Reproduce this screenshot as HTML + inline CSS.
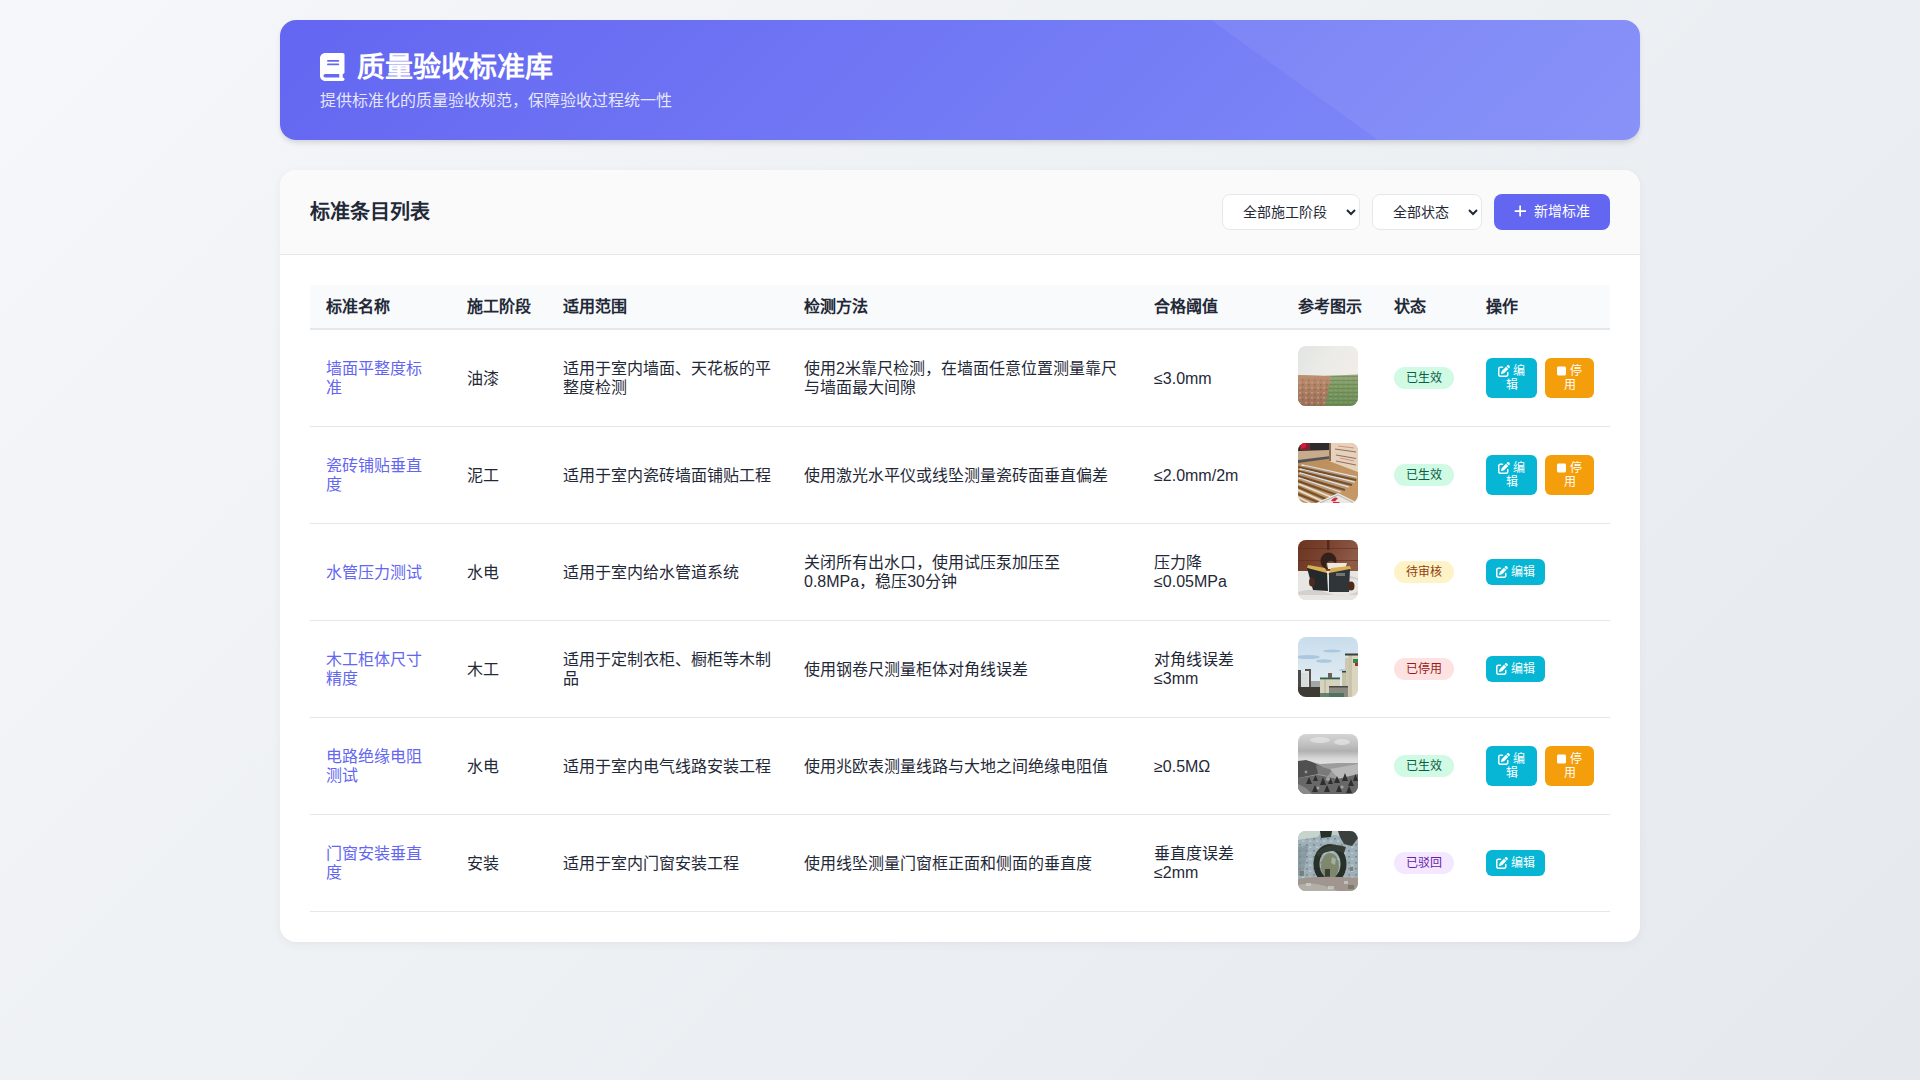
<!DOCTYPE html>
<html lang="zh-CN">
<head>
<meta charset="utf-8">
<title>质量验收标准库</title>
<style>
*{box-sizing:border-box;margin:0;padding:0}
html,body{width:1920px;height:1080px;overflow:hidden}
body{font-family:"Liberation Sans", sans-serif;background:linear-gradient(135deg,#f5f7fa 0%,#e5e9ed 100%);color:#1f2937;padding:20px 0}
.container{width:1360px;margin:0 auto}
.header{position:relative;height:120px;border-radius:16px;background:linear-gradient(135deg,#6366f1 0%,#818cf8 100%);box-shadow:0 4px 6px -1px rgba(0,0,0,0.1),0 2px 4px -1px rgba(0,0,0,0.06);overflow:hidden;color:#fff;padding:0 40px}
.header::before{content:"";position:absolute;top:0;left:0;right:0;bottom:0;background:rgba(255,255,255,0.06);clip-path:polygon(931px 0,1360px 0,1360px 120px,1098px 120px)}
.header h1{position:absolute;left:40px;top:30px;font-size:28px;font-weight:700;line-height:36px;display:flex;align-items:center}
.header h1 svg{width:24.5px;height:28px;margin-right:12px;fill:#fff;position:relative;top:-1.5px}
.header p{position:absolute;left:40px;top:69px;font-size:16px;line-height:24px;color:rgba(255,255,255,0.85)}
.card{margin-top:30px;background:#fff;border-radius:16px;box-shadow:0 2px 10px rgba(0,0,0,0.05);overflow:hidden}
.card-head{height:85px;background:#fafafa;border-bottom:1px solid #e5e7eb;display:flex;align-items:center;justify-content:space-between;padding:0 30px}
.card-head h2{font-size:20px;line-height:29px;font-weight:600;color:#1f2937;position:relative;top:0px}
.tools{display:flex;align-items:center}
.sel{height:36px;padding:8px 16px;border:1px solid #e5e7eb;border-radius:8px;background:#fff;font-family:"Liberation Sans", sans-serif;font-size:14px;color:#1f2937;margin-right:12px;outline:none}
.btn-add{height:36px;width:116px;border-radius:8px;background:#6366f1;color:#fff;font-size:14px;display:flex;align-items:center;justify-content:center}
.btn-add svg{width:12.25px;height:14px;fill:#fff;margin-right:8px;position:relative;top:-1px}
.btn-add span{position:relative;top:-1px;line-height:17px}
.tbl-wrap{padding:30px}
table{width:1300px;border-collapse:collapse;table-layout:fixed}
th{background:#f9fafb;height:44px;line-height:19px;text-align:left;padding:0 16px;font-size:16px;font-weight:700;color:#1f2937;border-bottom:2px solid #e5e7eb}
td{padding:16px;font-size:16px;color:#1f2937;border-bottom:1px solid #e5e7eb;vertical-align:middle;line-height:19px}
td.name{color:#6366f1}
td.thv{color:#1f2937}
.thumb{width:60px;height:60px;border-radius:8px;overflow:hidden;display:inline-block;vertical-align:baseline}
.thumb svg{display:block}
.badge{display:inline-block;height:22px;line-height:22px;padding:0 12px;border-radius:11px;font-size:12px;vertical-align:middle}
.b-ok{background:#d1fae5;color:#065f46}
.b-wait{background:#fef3c7;color:#92400e}
.b-off{background:#fee2e2;color:#991b1b}
.b-rej{background:#f3e8ff;color:#6b21a8}
.ops{display:flex;align-items:center}
.btn{display:block;color:#fff;font-size:12px;border-radius:6px;line-height:14px;text-align:center;padding:6px 0}
.btn svg{fill:#fff}
.edit{background:#06b6d4}
.stop{background:#f59e0b}
.w2{width:51px;height:40px;margin-right:8px}
.w2s{width:49px;height:40px}
.w1{width:59px;height:26px}
.ie{width:12px;height:12px;vertical-align:-1.5px}
.is{width:9px;height:12px;vertical-align:-1.5px}
</style>
</head>
<body>
<div class="container">
  <div class="header">
    <h1><svg viewBox="0 0 448 512"><path d="M96 0C43 0 0 43 0 96V416c0 53 43 96 96 96H384h32c17.7 0 32-14.3 32-32s-14.3-32-32-32V384c17.7 0 32-14.3 32-32V32c0-17.7-14.3-32-32-32H384 96zm0 384H352v64H96c-17.7 0-32-14.3-32-32s14.3-32 32-32zm32-240c0-8.8 7.2-16 16-16H336c8.8 0 16 7.2 16 16s-7.2 16-16 16H144c-8.8 0-16-7.2-16-16zm16 48H336c8.8 0 16 7.2 16 16s-7.2 16-16 16H144c-8.8 0-16-7.2-16-16s7.2-16 16-16z"/></svg>质量验收标准库</h1>
    <p>提供标准化的质量验收规范，保障验收过程统一性</p>
  </div>
  <div class="card">
    <div class="card-head">
      <h2>标准条目列表</h2>
      <div class="tools">
        <select class="sel"><option>全部施工阶段</option></select>
        <select class="sel"><option>全部状态</option></select>
        <div class="btn-add"><svg viewBox="0 0 448 512"><path d="M256 80c0-17.7-14.3-32-32-32s-32 14.3-32 32V224H48c-17.7 0-32 14.3-32 32s14.3 32 32 32H192V432c0 17.7 14.3 32 32 32s32-14.3 32-32V288H432c17.7 0 32-14.3 32-32s-14.3-32-32-32H256V80z"/></svg><span>新增标准</span></div>
      </div>
    </div>
    <div class="tbl-wrap">
      <table>
        <colgroup><col style="width:141px"><col style="width:96px"><col style="width:241px"><col style="width:350px"><col style="width:144px"><col style="width:96px"><col style="width:92px"><col style="width:140px"></colgroup>
        <thead><tr><th>标准名称</th><th>施工阶段</th><th>适用范围</th><th>检测方法</th><th>合格阈值</th><th>参考图示</th><th>状态</th><th>操作</th></tr></thead>
        <tbody>
<tr><td class="name">墙面平整度标<br>准</td><td>油漆</td><td>适用于室内墙面、天花板的平<br>整度检测</td><td>使用2米靠尺检测，在墙面任意位置测量靠尺<br>与墙面最大间隙</td><td class="thv">≤3.0mm</td><td><div class="thumb"><svg width="60" height="60" viewBox="0 0 60 60"><defs><linearGradient id="s1" x1="0" y1="0" x2="1" y2="0.6"><stop offset="0" stop-color="#e2e5e3"/><stop offset=".5" stop-color="#ecebe7"/><stop offset="1" stop-color="#f2eeea"/></linearGradient><linearGradient id="g1" x1="0" y1="0" x2="0" y2="1"><stop offset="0" stop-color="#98a67c"/><stop offset=".3" stop-color="#809c66"/><stop offset="1" stop-color="#6c8c58"/></linearGradient><linearGradient id="b1" x1="0" y1="0" x2="0" y2="1"><stop offset="0" stop-color="#c09070"/><stop offset=".35" stop-color="#b08266"/><stop offset="1" stop-color="#9c7058"/></linearGradient><pattern id="p1" width="6" height="5" patternUnits="userSpaceOnUse"><rect width="6" height="5" fill="none"/><rect x="1" y="1" width="2" height="1.5" fill="#d2b49c" opacity=".55"/><rect x="4" y="3" width="1.5" height="1.5" fill="#6e4a38" opacity=".45"/></pattern><pattern id="q1" width="5" height="4" patternUnits="userSpaceOnUse"><rect x="0" y="2" width="5" height="1" fill="#5a7a44" opacity=".45"/><rect x="2" y="0" width="1.5" height="1" fill="#b0c090" opacity=".4"/></pattern></defs><rect width="60" height="60" fill="url(#s1)"/><path d="M0 29 Q30 30.5 60 28.5 V60 H0Z" fill="url(#g1)"/><path d="M0 29 Q30 30.5 60 28.5 V60 H0Z" fill="url(#q1)"/><path d="M0 29 L33 30.3 L30 46 L27 60 H0Z" fill="url(#b1)"/><path d="M0 33 L32 34 L27 60 H0Z" fill="url(#p1)"/></svg></div></td><td><span class="badge b-ok">已生效</span></td><td><div class="ops"><div class="btn edit w2"><svg viewBox="0 0 512 512" class="ie"><path d="M471.6 21.7c-21.9-21.9-57.3-21.9-79.2 0L362.3 51.7l97.9 97.9 30.1-30.1c21.9-21.9 21.9-57.3 0-79.2L471.6 21.7zm-299.2 220c-6.1 6.1-10.8 13.6-13.5 21.9l-29.6 88.8c-2.900 8.6-.6 18.1 5.8 24.6s15.9 8.7 24.6 5.8l88.8-29.6c8.2-2.7 15.7-7.4 21.9-13.5L437.7 172.3 339.7 74.3 172.4 241.7zM96 64C43 64 0 107 0 160V416c0 53 43 96 96 96H352c53 0 96-43 96-96V320c0-17.7-14.3-32-32-32s-32 14.3-32 32v96c0 17.7-14.3 32-32 32H96c-17.7 0-32-14.3-32-32V160c0-17.7 14.3-32 32-32h96c17.7 0 32-14.3 32-32s-14.3-32-32-32H96z"/></svg> 编<br>辑</div><div class="btn stop w2s"><svg viewBox="0 0 384 512" class="is"><path d="M0 128C0 92.7 28.7 64 64 64H320c35.3 0 64 28.7 64 64V384c0 35.3-28.7 64-64 64H64c-35.3 0-64-28.7-64-64V128z"/></svg> 停<br>用</div></div></td></tr>
<tr><td class="name">瓷砖铺贴垂直<br>度</td><td>泥工</td><td>适用于室内瓷砖墙面铺贴工程</td><td>使用激光水平仪或线坠测量瓷砖面垂直偏差</td><td class="thv">≤2.0mm/2m</td><td><div class="thumb"><svg width="60" height="60" viewBox="0 0 60 60"><defs><linearGradient id="w2" x1="0" y1="0" x2="1" y2="1"><stop offset="0" stop-color="#b88a58"/><stop offset="1" stop-color="#c89a68"/></linearGradient></defs><rect width="60" height="60" fill="url(#w2)"/><path d="M0 0 H33 V14 L0 19Z" fill="#c9ab8c"/><path d="M0 0 H31 V7 L0 8Z" fill="#2f2b2c"/><path d="M2 0 H12 V7 H2Z" fill="#7c2430"/><path d="M3 0 H8 V4 L3 6Z" fill="#e0143c"/><path d="M0 17 L33 13 L33 15.5 L0 20Z" fill="#50545a"/><path d="M31 0 H60 V29 L31 18Z" fill="#e6d3bc"/><path d="M33 0 V18 L31 18 V0Z" fill="#8a6a50"/><g stroke="#7a5848" stroke-width="1.1" opacity=".8"><line x1="37" y1="6" x2="58" y2="9"/><line x1="38" y1="12" x2="58" y2="15.5"/><line x1="38" y1="18" x2="58" y2="22"/></g><g stroke="#c05040" stroke-width="1" opacity=".5"><line x1="40" y1="3" x2="56" y2="5"/><line x1="42" y1="15" x2="56" y2="18"/></g><g stroke="#5a3a1c" stroke-width="2.2" opacity=".75"><line x1="0" y1="24" x2="58" y2="37"/><line x1="0" y1="28" x2="54" y2="42"/><line x1="0" y1="33" x2="47" y2="47"/><line x1="0" y1="38" x2="39" y2="52"/><line x1="0" y1="44" x2="30" y2="57"/><line x1="0" y1="51" x2="22" y2="60"/></g><g stroke="#e6e2de" stroke-width="1.6" stroke-linecap="round"><line x1="4" y1="22" x2="58" y2="34"/><line x1="2" y1="26" x2="56" y2="39"/><line x1="2" y1="30" x2="50" y2="44"/><line x1="1" y1="35" x2="42" y2="49"/><line x1="1" y1="41" x2="33" y2="54"/><line x1="0" y1="47" x2="24" y2="58"/><line x1="0" y1="54" x2="12" y2="60"/></g><g stroke="#9a9896" stroke-width=".8"><line x1="6" y1="23" x2="58" y2="35"/><line x1="4" y1="27" x2="56" y2="40"/><line x1="3" y1="31" x2="50" y2="45"/><line x1="2" y1="36" x2="42" y2="50"/></g><path d="M18 60 L40 50 L60 60Z" fill="#ece8e4"/><path d="M22 60 L40 52 L56 60" fill="none" stroke="#a0a8a0" stroke-width=".8"/><path d="M33 58 q3 -5 7 -3 l-3 3.5z M35 59 h7 l-1 1 h-6z" fill="#d8283c"/></svg></div></td><td><span class="badge b-ok">已生效</span></td><td><div class="ops"><div class="btn edit w2"><svg viewBox="0 0 512 512" class="ie"><path d="M471.6 21.7c-21.9-21.9-57.3-21.9-79.2 0L362.3 51.7l97.9 97.9 30.1-30.1c21.9-21.9 21.9-57.3 0-79.2L471.6 21.7zm-299.2 220c-6.1 6.1-10.8 13.6-13.5 21.9l-29.6 88.8c-2.900 8.6-.6 18.1 5.8 24.6s15.9 8.7 24.6 5.8l88.8-29.6c8.2-2.7 15.7-7.4 21.9-13.5L437.7 172.3 339.7 74.3 172.4 241.7zM96 64C43 64 0 107 0 160V416c0 53 43 96 96 96H352c53 0 96-43 96-96V320c0-17.7-14.3-32-32-32s-32 14.3-32 32v96c0 17.7-14.3 32-32 32H96c-17.7 0-32-14.3-32-32V160c0-17.7 14.3-32 32-32h96c17.7 0 32-14.3 32-32s-14.3-32-32-32H96z"/></svg> 编<br>辑</div><div class="btn stop w2s"><svg viewBox="0 0 384 512" class="is"><path d="M0 128C0 92.7 28.7 64 64 64H320c35.3 0 64 28.7 64 64V384c0 35.3-28.7 64-64 64H64c-35.3 0-64-28.7-64-64V128z"/></svg> 停<br>用</div></div></td></tr>
<tr><td class="name">水管压力测试</td><td>水电</td><td>适用于室内给水管道系统</td><td>关闭所有出水口，使用试压泵加压至<br>0.8MPa，稳压30分钟</td><td class="thv">压力降<br>≤0.05MPa</td><td><div class="thumb"><svg width="60" height="60" viewBox="0 0 60 60"><defs><linearGradient id="w3" x1="0" y1="0" x2="1" y2="0.3"><stop offset="0" stop-color="#6a3420"/><stop offset=".5" stop-color="#7a4230"/><stop offset="1" stop-color="#8c5a46"/></linearGradient></defs><rect width="60" height="60" fill="#e4e1de"/><rect width="60" height="31" fill="url(#w3)"/><g fill="#5a2a18" opacity=".5"><rect x="0" y="8" width="60" height="1"/><rect x="0" y="20" width="60" height="1"/></g><rect x="29" y="0" width="2.5" height="10" fill="#56281a"/><path d="M0 31 H60 V60 H0Z" fill="#e8e6e4"/><g fill="#c6c2be" opacity=".6"><path d="M0 52 Q15 47 30 53 T60 51 V55 H0Z"/><path d="M40 36 Q50 34 60 38 V40 Q50 37 40 39Z"/></g><ellipse cx="30.5" cy="21" rx="8" ry="8.5" fill="#34211a"/><ellipse cx="33" cy="25" rx="5" ry="4" fill="#8a6452" opacity=".7"/><path d="M29 23 H49 L47 29 H30Z" fill="#f0e8dc"/><path d="M10 25 L27 28 L30 35 L33 28 L52 26 L53 29 L31 35 L9 28Z" fill="#d8ae52"/><path d="M9 28 L29 33 L30 51 L15 50Z" fill="#26292c"/><path d="M31 33 L52 29 L51 52 L31 52Z" fill="#30353a"/><rect x="38" y="33" width="9" height="3" fill="#8c8a80" opacity=".75"/><ellipse cx="14" cy="42" rx="3" ry="4.5" fill="#4a2c1c"/><ellipse cx="53" cy="46" rx="3.5" ry="4.5" fill="#4a2c1c"/></svg></div></td><td><span class="badge b-wait">待审核</span></td><td><div class="ops"><div class="btn edit w1"><svg viewBox="0 0 512 512" class="ie"><path d="M471.6 21.7c-21.9-21.9-57.3-21.9-79.2 0L362.3 51.7l97.9 97.9 30.1-30.1c21.9-21.9 21.9-57.3 0-79.2L471.6 21.7zm-299.2 220c-6.1 6.1-10.8 13.6-13.5 21.9l-29.6 88.8c-2.900 8.6-.6 18.1 5.8 24.6s15.9 8.7 24.6 5.8l88.8-29.6c8.2-2.7 15.7-7.4 21.9-13.5L437.7 172.3 339.7 74.3 172.4 241.7zM96 64C43 64 0 107 0 160V416c0 53 43 96 96 96H352c53 0 96-43 96-96V320c0-17.7-14.3-32-32-32s-32 14.3-32 32v96c0 17.7-14.3 32-32 32H96c-17.7 0-32-14.3-32-32V160c0-17.7 14.3-32 32-32h96c17.7 0 32-14.3 32-32s-14.3-32-32-32H96z"/></svg> 编辑</div></div></td></tr>
<tr><td class="name">木工柜体尺寸<br>精度</td><td>木工</td><td>适用于定制衣柜、橱柜等木制<br>品</td><td>使用钢卷尺测量柜体对角线误差</td><td class="thv">对角线误差<br>≤3mm</td><td><div class="thumb"><svg width="60" height="60" viewBox="0 0 60 60"><defs><linearGradient id="k4" x1="0" y1="0" x2="0" y2="1"><stop offset="0" stop-color="#c8ddec"/><stop offset=".6" stop-color="#dce8f0"/><stop offset="1" stop-color="#e6eef2"/></linearGradient></defs><rect width="60" height="60" fill="url(#k4)"/><g fill="#9cc0dc" opacity=".75"><ellipse cx="10" cy="20" rx="12" ry="2"/><ellipse cx="26" cy="24" rx="8" ry="1.8"/><ellipse cx="34" cy="14" rx="9" ry="1.4"/><ellipse cx="46" cy="33" rx="5" ry="1"/></g><rect x="50" y="17" width="10" height="43" fill="#d9d5bf"/><rect x="51" y="18" width="3" height="42" fill="#c0bba2" opacity=".7"/><rect x="47" y="21" width="4" height="39" fill="#cdc8b0"/><rect x="44" y="35" width="4" height="25" fill="#c6c0a6"/><rect x="47" y="16.5" width="13" height="2" fill="#3a4038"/><rect x="44" y="34" width="4" height="1.5" fill="#3a4038"/><rect x="55" y="22" width="5" height="4" fill="#2f8a4a"/><rect x="57" y="26" width="3" height="3" fill="#b02a30"/><rect x="22" y="41" width="20" height="19" fill="#d6d2bc"/><rect x="26" y="42" width="2" height="18" fill="#bdb8a0" opacity=".7"/><rect x="22" y="40.5" width="20" height="1.8" fill="#2f6048"/><rect x="30" y="36" width="4" height="5" fill="#6a6258"/><rect x="31" y="49" width="19" height="11" fill="#8a8a80"/><rect x="31" y="49" width="19" height="1.5" fill="#4a4a44"/><rect x="0" y="33" width="3" height="27" fill="#4a4a48"/><rect x="3" y="36" width="7" height="17" fill="#d8dcda"/><rect x="7" y="32" width="6" height="2" fill="#5a524a"/><rect x="11" y="33" width="2" height="20" fill="#5a524a"/><rect x="13" y="44" width="9" height="16" fill="#a0a8a6"/><rect x="0" y="50" width="22" height="10" fill="#3e3a34"/><rect x="22" y="56" width="24" height="4" fill="#3c6a58" opacity=".75"/></svg></div></td><td><span class="badge b-off">已停用</span></td><td><div class="ops"><div class="btn edit w1"><svg viewBox="0 0 512 512" class="ie"><path d="M471.6 21.7c-21.9-21.9-57.3-21.9-79.2 0L362.3 51.7l97.9 97.9 30.1-30.1c21.9-21.9 21.9-57.3 0-79.2L471.6 21.7zm-299.2 220c-6.1 6.1-10.8 13.6-13.5 21.9l-29.6 88.8c-2.900 8.6-.6 18.1 5.8 24.6s15.9 8.7 24.6 5.8l88.8-29.6c8.2-2.7 15.7-7.4 21.9-13.5L437.7 172.3 339.7 74.3 172.4 241.7zM96 64C43 64 0 107 0 160V416c0 53 43 96 96 96H352c53 0 96-43 96-96V320c0-17.7-14.3-32-32-32s-32 14.3-32 32v96c0 17.7-14.3 32-32 32H96c-17.7 0-32-14.3-32-32V160c0-17.7 14.3-32 32-32h96c17.7 0 32-14.3 32-32s-14.3-32-32-32H96z"/></svg> 编辑</div></div></td></tr>
<tr><td class="name">电路绝缘电阻<br>测试</td><td>水电</td><td>适用于室内电气线路安装工程</td><td>使用兆欧表测量线路与大地之间绝缘电阻值</td><td class="thv">≥0.5MΩ</td><td><div class="thumb"><svg width="60" height="60" viewBox="0 0 60 60"><defs><linearGradient id="k5" x1="0" y1="0" x2="0" y2="1"><stop offset="0" stop-color="#d4d4d4"/><stop offset=".3" stop-color="#c4c4c4"/><stop offset=".55" stop-color="#b0b0b0"/><stop offset=".8" stop-color="#d8d8d8"/><stop offset="1" stop-color="#e2e2e2"/></linearGradient></defs><rect width="60" height="31" fill="url(#k5)"/><g fill="#e6e6e6" opacity=".7"><ellipse cx="22" cy="6" rx="10" ry="3"/><ellipse cx="44" cy="8" rx="8" ry="3"/></g><path d="M0 28 L10 27 L22 30 L40 29 L60 29 V60 H0Z" fill="#9c9c9c"/><path d="M0 27 L8 26 L14 28 L24 33 L20 40 L0 44Z" fill="#505050"/><path d="M18 31 L34 36 L30 42 L20 40Z" fill="#7a7a7a"/><path d="M32 35 L60 30 V44 L40 44Z" fill="#b8b8b8"/><path d="M0 44 L20 41 L40 45 L60 40 V60 H0Z" fill="#686868"/><g fill="#2e2e2e"><path d="M8 50 l3 -7 l3 7z"/><path d="M15 47 l2.5 -6 l2.5 6z"/><path d="M22 51 l3 -8 l3 8z"/><path d="M30 50 l2.5 -6 l2.5 6z"/><path d="M36 49 l3 -7 l3 7z"/><path d="M44 47 l3 -8 l3 8z"/><path d="M50 52 l3 -7 l3 7z"/><path d="M55 47 l2.5 -7 l2.5 7z"/><path d="M26 58 l3 -7 l3 7z"/><path d="M38 58 l3 -7 l3 7z"/><path d="M14 58 l3 -7 l3 7z"/><path d="M48 59 l3 -7 l3 7z"/></g><path d="M0 50 L8 54 L14 60 H0Z" fill="#8a8a8a"/><g fill="#cfcfcf" opacity=".55"><circle cx="30" cy="45" r="2"/><circle cx="44" cy="53" r="1.6"/><circle cx="20" cy="54" r="1.4"/><circle cx="8" cy="38" r="1.4"/></g></svg></div></td><td><span class="badge b-ok">已生效</span></td><td><div class="ops"><div class="btn edit w2"><svg viewBox="0 0 512 512" class="ie"><path d="M471.6 21.7c-21.9-21.9-57.3-21.9-79.2 0L362.3 51.7l97.9 97.9 30.1-30.1c21.9-21.9 21.9-57.3 0-79.2L471.6 21.7zm-299.2 220c-6.1 6.1-10.8 13.6-13.5 21.9l-29.6 88.8c-2.900 8.6-.6 18.1 5.8 24.6s15.9 8.7 24.6 5.8l88.8-29.6c8.2-2.7 15.7-7.4 21.9-13.5L437.7 172.3 339.7 74.3 172.4 241.7zM96 64C43 64 0 107 0 160V416c0 53 43 96 96 96H352c53 0 96-43 96-96V320c0-17.7-14.3-32-32-32s-32 14.3-32 32v96c0 17.7-14.3 32-32 32H96c-17.7 0-32-14.3-32-32V160c0-17.7 14.3-32 32-32h96c17.7 0 32-14.3 32-32s-14.3-32-32-32H96z"/></svg> 编<br>辑</div><div class="btn stop w2s"><svg viewBox="0 0 384 512" class="is"><path d="M0 128C0 92.7 28.7 64 64 64H320c35.3 0 64 28.7 64 64V384c0 35.3-28.7 64-64 64H64c-35.3 0-64-28.7-64-64V128z"/></svg> 停<br>用</div></div></td></tr>
<tr><td class="name">门窗安装垂直<br>度</td><td>安装</td><td>适用于室内门窗安装工程</td><td>使用线坠测量门窗框正面和侧面的垂直度</td><td class="thv">垂直度误差<br>≤2mm</td><td><div class="thumb"><svg width="60" height="60" viewBox="0 0 60 60"><defs><pattern id="r6" width="7" height="6" patternUnits="userSpaceOnUse"><rect x="1" y="1" width="2" height="1.5" fill="#4e5a66" opacity=".45"/><rect x="4" y="3.5" width="2.5" height="1.5" fill="#d4e0e4" opacity=".5"/></pattern></defs><rect width="60" height="60" fill="#9eb0b8"/><rect width="60" height="60" fill="url(#r6)"/><path d="M0 0 H24 L20 6 L0 9Z" fill="#c6d4cc"/><path d="M34 0 H42 L40 4 H34Z" fill="#c0ccc4"/><path d="M22 0 H34 L33 6 L23 7Z" fill="#263028"/><path d="M40 0 H56 L60 7 L54 15 L46 13 L42 6Z" fill="#3a403e"/><path d="M0 16 L10 14 L6 40 L0 44Z" fill="#7c8a92" opacity=".6"/><ellipse cx="32" cy="33" rx="13.5" ry="17" fill="none" stroke="#283028" stroke-width="6"/><path d="M18 22 Q32 10 48 16 L46 22 Q32 16 20 26Z" fill="#343c36"/><ellipse cx="32" cy="35" rx="9" ry="13" fill="#7e886c"/><path d="M27 38 h5 v10 h-5z" fill="#3a4034"/><path d="M34 26 l4 2 l-1 6 l-4 -2z" fill="#b8c0b0" opacity=".7"/><path d="M0 48 Q20 44 60 47 V60 H0Z" fill="#a0968f"/><path d="M0 54 Q14 50 30 56 L40 60 H0Z" fill="#c2c6c0" opacity=".55"/><g fill="#d6dcd8" opacity=".6"><rect x="8" y="52" width="5" height="3"/><rect x="30" y="55" width="6" height="3"/><rect x="46" y="50" width="4" height="3"/></g><g fill="#6a705e" opacity=".7"><rect x="50" y="54" width="6" height="4"/><rect x="2" y="40" width="4" height="5"/><rect x="52" y="36" width="3" height="4"/></g></svg></div></td><td><span class="badge b-rej">已驳回</span></td><td><div class="ops"><div class="btn edit w1"><svg viewBox="0 0 512 512" class="ie"><path d="M471.6 21.7c-21.9-21.9-57.3-21.9-79.2 0L362.3 51.7l97.9 97.9 30.1-30.1c21.9-21.9 21.9-57.3 0-79.2L471.6 21.7zm-299.2 220c-6.1 6.1-10.8 13.6-13.5 21.9l-29.6 88.8c-2.900 8.6-.6 18.1 5.8 24.6s15.9 8.7 24.6 5.8l88.8-29.6c8.2-2.7 15.7-7.4 21.9-13.5L437.7 172.3 339.7 74.3 172.4 241.7zM96 64C43 64 0 107 0 160V416c0 53 43 96 96 96H352c53 0 96-43 96-96V320c0-17.7-14.3-32-32-32s-32 14.3-32 32v96c0 17.7-14.3 32-32 32H96c-17.7 0-32-14.3-32-32V160c0-17.7 14.3-32 32-32h96c17.7 0 32-14.3 32-32s-14.3-32-32-32H96z"/></svg> 编辑</div></div></td></tr>
        </tbody>
      </table>
    </div>
  </div>
</div>
</body>
</html>
